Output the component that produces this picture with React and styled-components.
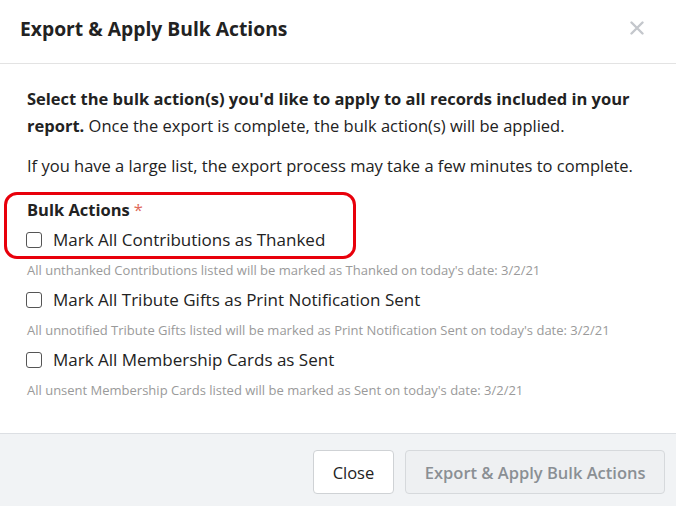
import React, { useState } from "react";
import styled, { createGlobalStyle } from "styled-components";

const GlobalStyle = createGlobalStyle`
  html, body {
    margin: 0;
    padding: 0;
    background: #fff;
  }
  body {
    font-family: "Open Sans", "Noto Sans", sans-serif;
    color: #212529;
  }
`;

const Modal = styled.div`
  width: 676px;
  height: 506px;
  display: flex;
  flex-direction: column;
  background: #fff;
  overflow: hidden;
`;

const Header = styled.div`
  height: 64px;
  box-sizing: border-box;
  display: flex;
  align-items: center;
  justify-content: space-between;
  padding: 0 32px 7px 20px;
  border-bottom: 1px solid #e3e3e3;
`;

const Title = styled.h2`
  margin: 0;
  font-size: 19.3px;
  font-weight: 700;
  color: #222;
`;

const CloseX = styled.button`
  border: none;
  background: none;
  padding: 0;
  display: flex;
  cursor: pointer;
`;

const Body = styled.div`
  flex: 1;
  padding: 21px 20px 0 27px;
`;

const Text = styled.p`
  margin: 0 0 13px;
  font-size: 16.5px;
  line-height: 27px;
  color: #222;
  b {
    font-weight: 700;
  }
`;

const Highlight = styled.div`
  margin: 0 0 -4px -23px;
  padding: 3px 28px 1px 20px;
  width: fit-content;
  border: 3px solid #e8000b;
  border-radius: 13px;
`;

const GroupLabel = styled.div`
  font-size: 16.5px;
  font-weight: 700;
  line-height: 24px;
  margin-bottom: 3px;
  color: #222;
`;

const Required = styled.span`
  color: #e0695a;
  font-weight: 400;
  margin-left: 4px;
`;

const Option = styled.label`
  display: flex;
  align-items: center;
  gap: 11px;
  font-size: 17px;
  line-height: 30px;
  color: #222;
  cursor: pointer;
`;

const Box = styled.span`
  width: 14px;
  height: 14px;
  margin-left: -1px;
  border: 1px solid #555;
  border-radius: 3px;
  flex-shrink: 0;
  background: ${(p) => (p.checked ? "#2a6ebb" : "#fff")};
`;

const Hint = styled.div`
  font-size: 13px;
  line-height: 30px;
  color: #9a9a9a;
`;

const Footer = styled.div`
  height: 73px;
  box-sizing: border-box;
  border-top: 1px solid #dcdfe3;
  background: #f1f3f5;
  display: flex;
  align-items: flex-start;
  justify-content: flex-end;
  gap: 11px;
  padding: 16px 11px 0 0;
`;

const Button = styled.button`
  height: 44px;
  padding: 0 ${(p) => (p.disabled ? "18.5px" : "19px")};
  font-family: inherit;
  font-size: 16.5px;
  border-radius: 4px;
  border: 1px solid ${(p) => (p.disabled ? "#d6d9dc" : "#cfd2d5")};
  background: ${(p) => (p.disabled ? "#eef0f2" : "#fff")};
  color: ${(p) => (p.disabled ? "#8a8f94" : "#222")};
  font-weight: ${(p) => (p.disabled ? 600 : 400)};
  cursor: ${(p) => (p.disabled ? "default" : "pointer")};
`;

const actions = [
  {
    label: "Mark All Contributions as Thanked",
    hint: "All unthanked Contributions listed will be marked as Thanked on today's date: 3/2/21",
  },
  {
    label: "Mark All Tribute Gifts as Print Notification Sent",
    hint: "All unnotified Tribute Gifts listed will be marked as Print Notification Sent on today's date: 3/2/21",
  },
  {
    label: "Mark All Membership Cards as Sent",
    hint: "All unsent Membership Cards listed will be marked as Sent on today's date: 3/2/21",
  },
];

function ActionOption({ action, checked, onToggle }) {
  return (
    <Option onClick={onToggle}>
      <Box checked={checked} />
      {action.label}
    </Option>
  );
}

export default function App() {
  const [selected, setSelected] = useState([]);

  const toggle = (i) => {
    setSelected((s) => (s.includes(i) ? s.filter((x) => x !== i) : [...s, i]));
  };

  const [first, ...rest] = actions;

  return (
    <>
      <GlobalStyle />
      <Modal>
        <Header>
          <Title>Export &amp; Apply Bulk Actions</Title>
          <CloseX aria-label="Close">
            <svg width="14" height="14" viewBox="0 0 14 14">
              <path d="M1.5 1.5L12.5 12.5M12.5 1.5L1.5 12.5" stroke="#c4c7cc" strokeWidth="2.4" strokeLinecap="round" />
            </svg>
          </CloseX>
        </Header>
        <Body>
          <Text>
            <b>Select the bulk action(s) you'd like to apply to all records included in your report.</b>{" "}
            Once the export is complete, the bulk action(s) will be applied.
          </Text>
          <Text>If you have a large list, the export process may take a few minutes to complete.</Text>
          <Highlight>
            <GroupLabel>
              Bulk Actions<Required>*</Required>
            </GroupLabel>
            <ActionOption action={first} checked={selected.includes(0)} onToggle={() => toggle(0)} />
          </Highlight>
          <Hint>{first.hint}</Hint>
          {rest.map((a, i) => (
            <React.Fragment key={a.label}>
              <ActionOption action={a} checked={selected.includes(i + 1)} onToggle={() => toggle(i + 1)} />
              <Hint>{a.hint}</Hint>
            </React.Fragment>
          ))}
        </Body>
        <Footer>
          <Button>Close</Button>
          <Button disabled={selected.length === 0}>Export &amp; Apply Bulk Actions</Button>
        </Footer>
      </Modal>
    </>
  );
}
